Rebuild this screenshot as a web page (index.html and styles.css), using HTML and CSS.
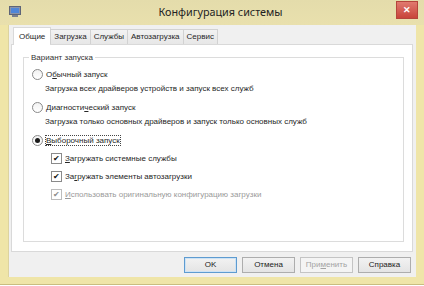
FILE: index.html
```html
<!DOCTYPE html>
<html>
<head>
    <link rel="stylesheet" href="styles.css">
</head>
<body>
    <div class="window">
        <div class="titlebar">
            <svg class="app-icon" width="12" height="11" viewBox="0 0 12 11">
                <rect x="0.5" y="0.5" width="11" height="8" fill="#8a93a8" stroke="#5d6478"/>
                <rect x="2" y="2" width="8" height="5" fill="#4f86d8"/>
                <rect x="3" y="9" width="6" height="2" fill="#7a8090"/>
            </svg>
            <div class="title">Конфигурация системы</div>
            <div class="close">&#x2715;</div>
        </div>

        <div class="client">
            <div class="tabs">
                <div class="tab selected">Общие</div>
                <div class="tab">Загрузка</div>
                <div class="tab">Службы</div>
                <div class="tab">Автозагрузка</div>
                <div class="tab">Сервис</div>
            </div>

            <div class="panel">
                <fieldset class="group">
                    <legend>Вариант запуска</legend>

                    <div class="option">
                        <span class="radio"></span>
                        <span>О<u>б</u>ычный запуск</span>
                    </div>
                    <div class="hint">Загрузка всех драйверов устройств и запуск всех служб</div>

                    <div class="option">
                        <span class="radio"></span>
                        <span>Диагности<u>ч</u>еский запуск</span>
                    </div>
                    <div class="hint">Загрузка только основных драйверов и запуск только основных служб</div>

                    <div class="option">
                        <span class="radio checked"></span>
                        <span class="focus"><u>В</u>ыборочный запуск</span>
                    </div>

                    <div class="checks">
                        <div class="check-row">
                            <span class="check">&#x2714;</span>
                            <span><u>З</u>агружать системные службы</span>
                        </div>
                        <div class="check-row">
                            <span class="check">&#x2714;</span>
                            <span>За<u>г</u>ружать элементы автозагрузки</span>
                        </div>
                        <div class="check-row disabled">
                            <span class="check">&#x2714;</span>
                            <span><u>И</u>спользовать оригинальную конфигурацию загрузки</span>
                        </div>
                    </div>
                </fieldset>
            </div>

            <div class="buttons">
                <div class="btn default">OK</div>
                <div class="btn">Отмена</div>
                <div class="btn disabled">При<u>м</u>енить</div>
                <div class="btn">Справка</div>
            </div>
        </div>
    </div>
</body>
</html>
```

FILE: styles.css
```css
body {
    margin: 0;
    width: 424px;
    height: 286px;
    background: #ffffff;
    font-family: "Liberation Sans", Arial, sans-serif;
    font-size: 8px;
    color: #262626;
    overflow: hidden;
}
.window {
    width: 424px;
    height: 285px;
    box-sizing: border-box;
    background: #efe5a8; /* рамка окна */
    border-bottom: 1px solid #c9bd80;
    padding: 0 8px 7px 8px;
    display: flex;
    flex-direction: column;
}
.titlebar {
    height: 25px;
    margin: 0 -8px;
    padding: 0 6px 0 9px;
    background: linear-gradient(to bottom, #e4dcab, #e9e0ad);
    display: grid;
    grid-template-columns: 22px 1fr 22px;
    align-items: center;
}
.app-icon {
    margin-top: -3px;
}
.title {
    text-align: center;
    font-family: "Noto Sans", "DejaVu Sans", sans-serif;
    font-size: 10.8px;
    color: #222;
    padding-left: 14px;
    margin-top: -2px;
}
.close {
    align-self: start;
    margin-top: 1px;
    height: 16px;
    background: linear-gradient(to bottom, #e07a6f, #c8443a);
    border: 1px solid #b5453c;
    color: #fff;
    font-size: 9px;
    font-weight: bold;
    text-align: center;
    line-height: 16px;
}
.client {
    flex: 1;
    background: #f0f0f0;
    padding: 2px 3px 2px 2px;
    display: flex;
    flex-direction: column;
    border-left: 1px solid #dcd3a0;
}
.tabs {
    display: flex;
    align-items: flex-end;
    height: 17px;
    padding-left: 2px;
    position: relative;
    z-index: 1;
}
.tab {
    height: 15px;
    line-height: 14px;
    padding: 0 3px;
    box-sizing: border-box;
    border: 1px solid #d2d2d2;
    border-bottom: none;
    margin-right: -1px;
    background: linear-gradient(to bottom, #f2f2f2, #e7e7e7);
}
.tab.selected {
    height: 18px;
    line-height: 17px;
    padding: 0 5px;
    background: #ffffff;
    margin-bottom: -1px;
    border-color: #d9d9d9;
}
.panel {
    background: #ffffff;
    border: 1px solid #d9d9d9;
    height: 208px;
    box-sizing: border-box;
    padding: 8px 8px 9px 11px;
    display: flex;
}
.group {
    flex: 1;
    margin: 0;
    border: 1px solid #dcdcdc;
    padding: 6px 8px 0 8px;
}
legend {
    padding: 0 2px;
    margin-left: -3px;
    color: #333;
}
.option {
    display: flex;
    align-items: center;
    gap: 3px;
    height: 13px;
}
.radio {
    width: 9px;
    height: 9px;
    border: 1px solid #8a8a8a;
    border-radius: 50%;
    background: linear-gradient(to bottom, #f2f2f2, #ffffff);
    display: flex;
    align-items: center;
    justify-content: center;
}
.radio.checked::after {
    content: "";
    width: 5px;
    height: 5px;
    border-radius: 50%;
    background: #1a1a1a;
}
.focus {
    outline: 1px dotted #444;
    outline-offset: 0;
}
.hint {
    padding-left: 13px;
    padding-top: 1px;
    height: 13px;
    line-height: 13px;
    margin-bottom: 6px;
}
.checks {
    padding-left: 19px;
    margin-top: 5px;
}
.check-row {
    display: flex;
    align-items: center;
    gap: 3px;
    height: 13px;
    margin-bottom: 5px;
}
.check {
    width: 9px;
    height: 9px;
    border: 1px solid #8a8a8a;
    background: #fff;
    font-size: 8px;
    line-height: 9px;
    text-align: center;
    color: #111;
}
.check-row.disabled {
    color: #9a9a9a;
}
.check-row.disabled .check {
    color: #8c8c8c;
    border-color: #bcbcbc;
}
.buttons {
    display: flex;
    justify-content: flex-end;
    gap: 5px;
    margin-top: 5px;
    padding-right: 2px;
}
.btn {
    width: 53px;
    height: 16px;
    box-sizing: border-box;
    border: 1px solid #adadad;
    background: linear-gradient(to bottom, #f2f2f2, #e4e4e4);
    text-align: center;
    line-height: 14px;
    color: #222;
}
.btn.default {
    border-color: #5e9bd0;
    box-shadow: inset 0 0 0 1px #cde3f5;
}
.btn.disabled {
    color: #a3a3a3;
    border-color: #c4c4c4;
    background: #f4f4f4;
}
```
